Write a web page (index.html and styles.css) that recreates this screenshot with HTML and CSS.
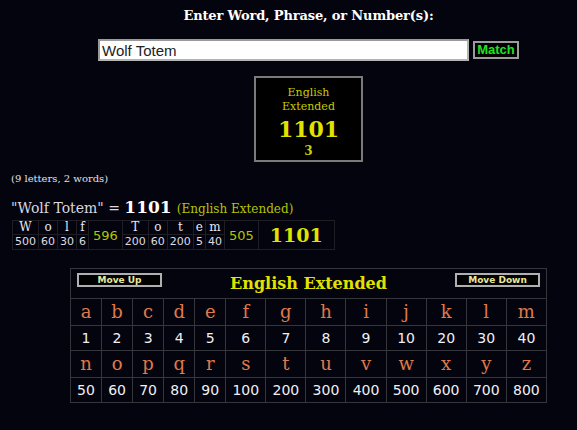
FILE: index.html
```html
<!DOCTYPE html>
<html>
<head>
<meta charset="utf-8">
<link rel="stylesheet" href="styles.css">
</head>
<body>
<div class="page">
  <div class="center">
    <h1 class="prompt">Enter Word, Phrase, or Number(s):</h1>
    <div class="form-row">
      <input class="query" type="text" value="Wolf Totem">
      <button class="match">Match</button>
    </div>
    <div class="result-box">
      <div class="rb-name">English</div>
      <div class="rb-name">Extended</div>
      <div class="rb-value">1101</div>
      <div class="rb-count">3</div>
    </div>
  </div>

  <p class="counts">(9 letters, 2 words)</p>
  <p class="equation"><span class="eq-phrase">"Wolf Totem" = </span><span class="eq-value">1101</span> <span class="eq-cipher">(English Extended)</span></p>

  <table class="breakdown">
    <tr class="bd-letters">
      <td>W</td><td>o</td><td>l</td><td>f</td>
      <td class="bd-sum" rowspan="2">596</td>
      <td>T</td><td>o</td><td>t</td><td>e</td><td>m</td>
      <td class="bd-sum" rowspan="2">505</td>
      <td class="bd-total" rowspan="2">1101</td>
    </tr>
    <tr class="bd-nums">
      <td>500</td><td>60</td><td>30</td><td>6</td>
      <td>200</td><td>60</td><td>200</td><td>5</td><td>40</td>
    </tr>
  </table>

  <table class="cipher">
    <colgroup>
      <col class="c-narrow"><col class="c-narrow"><col class="c-narrow"><col class="c-narrow"><col class="c-narrow">
      <col class="c-wide"><col class="c-wide"><col class="c-wide"><col class="c-wide"><col class="c-wide"><col class="c-wide"><col class="c-wide"><col class="c-wide">
    </colgroup>
    <tr>
      <td class="head" colspan="13">
        <div class="head-bar">
          <button class="move">Move Up</button>
          <span class="cipher-title">English Extended</span>
          <button class="move">Move Down</button>
        </div>
      </td>
    </tr>
    <tr class="letters"><td>a</td><td>b</td><td>c</td><td>d</td><td>e</td><td>f</td><td>g</td><td>h</td><td>i</td><td>j</td><td>k</td><td>l</td><td>m</td></tr>
    <tr class="nums"><td>1</td><td>2</td><td>3</td><td>4</td><td>5</td><td>6</td><td>7</td><td>8</td><td>9</td><td>10</td><td>20</td><td>30</td><td>40</td></tr>
    <tr class="letters"><td>n</td><td>o</td><td>p</td><td>q</td><td>r</td><td>s</td><td>t</td><td>u</td><td>v</td><td>w</td><td>x</td><td>y</td><td>z</td></tr>
    <tr class="nums"><td>50</td><td>60</td><td>70</td><td>80</td><td>90</td><td>100</td><td>200</td><td>300</td><td>400</td><td>500</td><td>600</td><td>700</td><td>800</td></tr>
  </table>
</div>
</body>
</html>
```

FILE: styles.css
```css
html, body {
  margin: 0;
  padding: 0;
  background: #04040f;
}
body {
  font-family: "DejaVu Serif", serif;
  color: #e8e8f0;
}
.page {
  padding-top: 8px;
}
.center {
  margin-left: 40px;
  width: 537px;
  display: flex;
  flex-direction: column;
  align-items: center;
}
.prompt {
  margin: 0;
  font-family: "DejaVu Serif", serif;
  font-size: 13px;
  line-height: 16px;
  font-weight: bold;
  color: #ffffff;
  letter-spacing: -0.15px;
}
.form-row {
  margin-top: 15px;
  display: flex;
  align-items: center;
  gap: 4px;
}
.query {
  box-sizing: border-box;
  width: 371px;
  height: 22px;
  margin: 0;
  padding: 0 2px;
  border: 2px solid #b4b4b4;
  border-top-color: #9a9a9a;
  border-left-color: #9a9a9a;
  background: #ffffff;
  font-family: "Liberation Sans", Arial, sans-serif;
  font-size: 15px;
  color: #222222;
  outline: none;
}
.match {
  box-sizing: border-box;
  width: 46px;
  height: 18px;
  margin: 0;
  padding: 0;
  border: 2px solid #9c9c9c;
  background: #000000;
  color: #22e022;
  font-family: "Liberation Sans", Arial, sans-serif;
  font-weight: bold;
  font-size: 13px;
  line-height: 14px;
}
.result-box {
  margin-top: 15px;
  box-sizing: border-box;
  width: 109px;
  border: 2px solid #7a7a7a;
  background: #000000;
  padding: 8px 0 2px;
  text-align: center;
  color: #c8cc00;
}
.rb-name {
  font-size: 11px;
  line-height: 14px;
}
.rb-value {
  font-size: 22px;
  line-height: 30px;
  font-weight: bold;
  color: #e2e200;
}
.rb-count {
  font-size: 12px;
  line-height: 14px;
  font-weight: bold;
}
.counts {
  margin: 11px 0 0 11px;
  font-size: 10px;
  line-height: 12px;
  color: #e0e0e8;
}
.equation {
  margin: 12px 0 0 11px;
  line-height: 20px;
  white-space: nowrap;
}
.eq-phrase {
  font-size: 14px;
  color: #d8d8e0;
}
.eq-value {
  font-size: 17px;
  font-weight: bold;
  color: #ffffff;
}
.eq-cipher {
  font-size: 12px;
  color: #b4c400;
}
.breakdown {
  margin: 1px 0 0 12px;
  border-collapse: collapse;
}
.breakdown td {
  border: 1px solid #1e1e24;
  padding: 0 2px;
  text-align: center;
  line-height: 13px;
}
.bd-letters td {
  font-size: 12px;
  color: #e8e8f4;
}
.bd-nums td {
  font-family: "DejaVu Sans", sans-serif;
  font-size: 11px;
  color: #dcdce4;
  line-height: 14px;
}
.breakdown td.bd-sum {
  font-family: "DejaVu Sans", sans-serif;
  font-size: 13px;
  color: #b4c400;
  padding: 0 4px;
}
.breakdown td.bd-total {
  font-size: 19px;
  font-weight: bold;
  color: #e2e200;
  padding: 0 11px;
}
.cipher {
  margin: 18px 0 0 70px;
  width: 477px;
  table-layout: fixed;
  border-collapse: collapse;
}
.c-narrow { width: 31px; }
.c-wide { width: 40px; }
.cipher td {
  border: 1px solid #35353c;
  padding: 0;
  text-align: center;
}
.cipher td.head {
  padding: 4px 6px 4px;
}
.head-bar {
  display: flex;
  justify-content: space-between;
  align-items: flex-start;
}
.move {
  box-sizing: border-box;
  width: 85px;
  height: 14px;
  margin: 0;
  padding: 0;
  border: 2px solid #b0b0b0;
  background: #000000;
  color: #e8e89c;
  font-family: "DejaVu Sans", sans-serif;
  font-weight: bold;
  font-size: 9px;
  line-height: 10px;
}
.cipher-title {
  font-size: 16px;
  line-height: 21px;
  font-weight: bold;
  color: #e2e200;
}
.letters td {
  font-size: 18px;
  line-height: 26px;
  color: #e07a48;
}
.nums td {
  font-family: "DejaVu Sans", sans-serif;
  font-size: 14px;
  line-height: 24px;
  color: #f0f0f4;
}
```
